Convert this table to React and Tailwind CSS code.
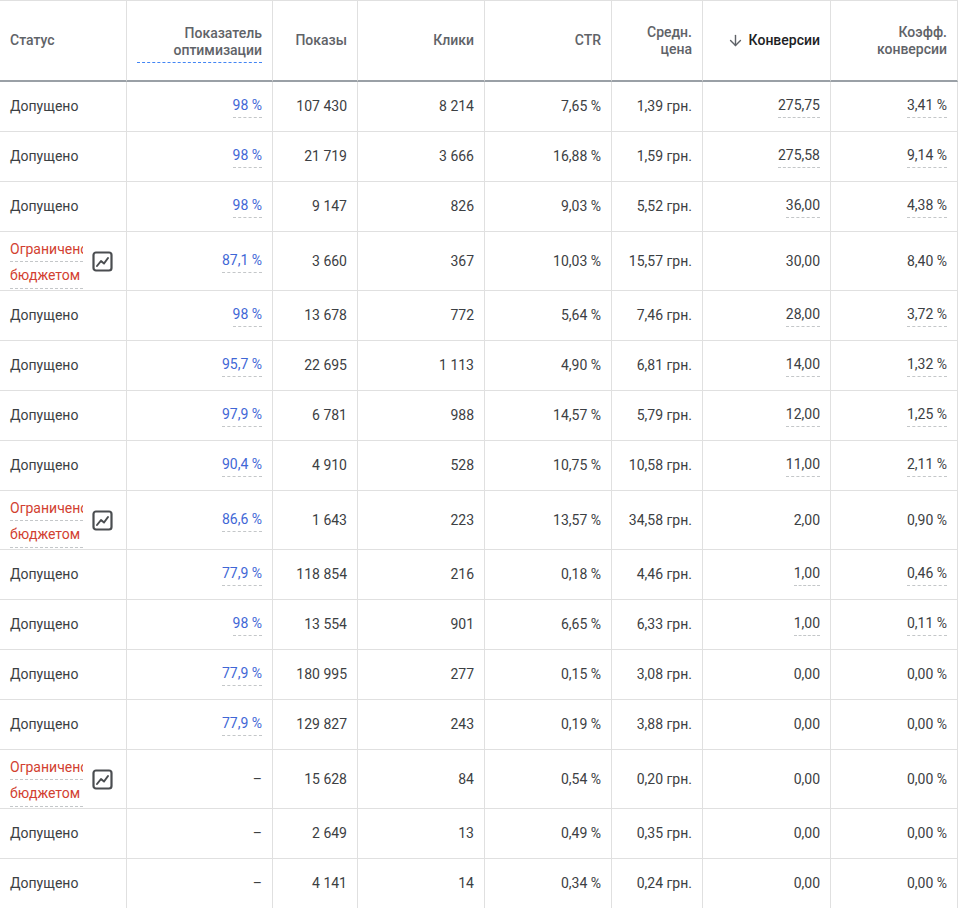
import { ArrowDown } from 'lucide-react';

const rows = [
  { status: 'ok', opt: '98 %', shows: '107 430', clicks: '8 214', ctr: '7,65 %', cpc: '1,39 грн.', conv: '275,75', rate: '3,41 %', u: true },
  { status: 'ok', opt: '98 %', shows: '21 719', clicks: '3 666', ctr: '16,88 %', cpc: '1,59 грн.', conv: '275,58', rate: '9,14 %', u: true },
  { status: 'ok', opt: '98 %', shows: '9 147', clicks: '826', ctr: '9,03 %', cpc: '5,52 грн.', conv: '36,00', rate: '4,38 %', u: true },
  { status: 'limited', opt: '87,1 %', shows: '3 660', clicks: '367', ctr: '10,03 %', cpc: '15,57 грн.', conv: '30,00', rate: '8,40 %', u: false },
  { status: 'ok', opt: '98 %', shows: '13 678', clicks: '772', ctr: '5,64 %', cpc: '7,46 грн.', conv: '28,00', rate: '3,72 %', u: true },
  { status: 'ok', opt: '95,7 %', shows: '22 695', clicks: '1 113', ctr: '4,90 %', cpc: '6,81 грн.', conv: '14,00', rate: '1,32 %', u: true },
  { status: 'ok', opt: '97,9 %', shows: '6 781', clicks: '988', ctr: '14,57 %', cpc: '5,79 грн.', conv: '12,00', rate: '1,25 %', u: true },
  { status: 'ok', opt: '90,4 %', shows: '4 910', clicks: '528', ctr: '10,75 %', cpc: '10,58 грн.', conv: '11,00', rate: '2,11 %', u: true },
  { status: 'limited', opt: '86,6 %', shows: '1 643', clicks: '223', ctr: '13,57 %', cpc: '34,58 грн.', conv: '2,00', rate: '0,90 %', u: false },
  { status: 'ok', opt: '77,9 %', shows: '118 854', clicks: '216', ctr: '0,18 %', cpc: '4,46 грн.', conv: '1,00', rate: '0,46 %', u: true },
  { status: 'ok', opt: '98 %', shows: '13 554', clicks: '901', ctr: '6,65 %', cpc: '6,33 грн.', conv: '1,00', rate: '0,11 %', u: true },
  { status: 'ok', opt: '77,9 %', shows: '180 995', clicks: '277', ctr: '0,15 %', cpc: '3,08 грн.', conv: '0,00', rate: '0,00 %', u: false },
  { status: 'ok', opt: '77,9 %', shows: '129 827', clicks: '243', ctr: '0,19 %', cpc: '3,88 грн.', conv: '0,00', rate: '0,00 %', u: false },
  { status: 'limited', opt: null, shows: '15 628', clicks: '84', ctr: '0,54 %', cpc: '0,20 грн.', conv: '0,00', rate: '0,00 %', u: false },
  { status: 'ok', opt: null, shows: '2 649', clicks: '13', ctr: '0,49 %', cpc: '0,35 грн.', conv: '0,00', rate: '0,00 %', u: false },
  { status: 'ok', opt: null, shows: '4 141', clicks: '14', ctr: '0,34 %', cpc: '0,24 грн.', conv: '0,00', rate: '0,00 %', u: false },
];

function ChartIcon() {
  return (
    <svg width="21" height="21" viewBox="0 0 21 21" fill="none" className="shrink-0 ml-[9px]">
      <rect x="1.5" y="1.5" width="18" height="18" rx="2.5" stroke="#4a4d50" strokeWidth="2.2" />
      <path d="M5 15 L9 10 L12 12.5 L16 7" stroke="#4a4d50" strokeWidth="2" strokeLinejoin="round" strokeLinecap="round" />
    </svg>
  );
}

function Dashed({ children, className = '' }) {
  return (
    <span className={`border-b border-dashed border-[#c4c7c9] pb-[1px] ${className}`}>{children}</span>
  );
}

const cell = 'border-r border-b border-[#e0e0e0] px-[10px] flex items-center';
const head = 'h-[82px] border-t border-r border-b-2 border-[#e0e0e0] border-b-[#9aa0a6] px-[10px] flex items-center font-medium leading-[17px]';

export default function App() {
  return (
    <div className="w-[964px] min-h-[908px] bg-white" style={{ fontFamily: 'Roboto, "Noto Sans", sans-serif' }}>
      <div className="grid grid-cols-[127px_146px_85px_127px_127px_91px_128px_127px] w-[958px] text-[14px] text-[#3c4043]">
        {/* Header */}
        <div className={`${head} text-[#5f6368]`}>Статус</div>
        <div className={`${head} justify-end text-right text-[#5f6368]`}>
          <span className="inline-block w-[126px] border-b border-dashed border-[#4285f4] pb-[3px] pt-[6px]">Показатель<br />оптимизации</span>
        </div>
        <div className={`${head} justify-end text-[#5f6368]`}>Показы</div>
        <div className={`${head} justify-end text-[#5f6368]`}>Клики</div>
        <div className={`${head} justify-end text-[#5f6368]`}>CTR</div>
        <div className={`${head} justify-end text-right text-[#5f6368]`}>
          <span>Средн.<br />цена</span>
        </div>
        <div className={`${head} justify-end gap-[5px] text-[#202124] font-bold`}>
          <ArrowDown size={17} strokeWidth={2} className="text-[#5f6368]" />
          Конверсии
        </div>
        <div className={`${head} justify-end text-right text-[#5f6368]`}>
          <span>Коэфф.<br />конверсии</span>
        </div>

        {/* Rows */}
        {rows.map((r, i) => {
          const h = r.status === 'limited' ? 'h-[59px]' : 'h-[50px]';
          return (
            <div key={i} className="contents">
              <div className={`${cell} ${h}`}>
                {r.status === 'limited' ? (
                  <>
                    <div className="w-[73px] shrink-0 overflow-hidden text-[#d23f31] pt-[4px]">
                      <div className="whitespace-nowrap leading-[22px] border-b border-dashed border-[#c4c7c9] pb-[1px]">Ограничено</div>
                      <div className="whitespace-nowrap leading-[22px] border-b border-dashed border-[#c4c7c9] pb-[2px] mt-[2px]">бюджетом</div>
                    </div>
                    <ChartIcon />
                  </>
                ) : (
                  <span>Допущено</span>
                )}
              </div>
              <div className={`${cell} ${h} justify-end`}>
                {r.opt ? <Dashed className="text-[#3f67d6]">{r.opt}</Dashed> : <span>–</span>}
              </div>
              <div className={`${cell} ${h} justify-end`}>{r.shows}</div>
              <div className={`${cell} ${h} justify-end`}>{r.clicks}</div>
              <div className={`${cell} ${h} justify-end`}>{r.ctr}</div>
              <div className={`${cell} ${h} justify-end`}>{r.cpc}</div>
              <div className={`${cell} ${h} justify-end`}>
                {r.u ? <Dashed>{r.conv}</Dashed> : <span>{r.conv}</span>}
              </div>
              <div className={`${cell} ${h} justify-end`}>
                {r.u ? <Dashed>{r.rate}</Dashed> : <span>{r.rate}</span>}
              </div>
            </div>
          );
        })}
      </div>
    </div>
  );
}
